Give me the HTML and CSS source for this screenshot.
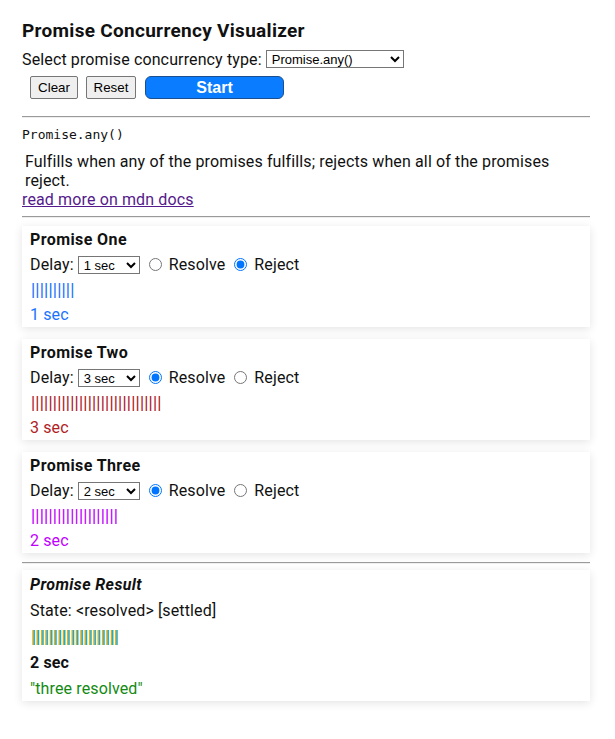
FILE: index.html
```html
<!DOCTYPE html>
<html lang="en">
<head>
<meta charset="utf-8">
<title>Promise Concurrency Visualizer</title>
<link rel="stylesheet" href="styles.css">
</head>
<body>
<div class="app">
  <h1 class="title">Promise Concurrency Visualizer</h1>
  <div class="type-row">
    <label for="ptype">Select promise concurrency type:</label>
    <select id="ptype" class="type-select">
      <option>Promise.all()</option>
      <option>Promise.allSettled()</option>
      <option selected>Promise.any()</option>
      <option>Promise.race()</option>
    </select>
  </div>
  <div class="actions">
    <button class="btn btn-clear">Clear</button>
    <button class="btn btn-reset">Reset</button>
    <button class="btn-start">Start</button>
  </div>
  <hr class="rule rule-top">
  <div class="code">Promise.any()</div>
  <p class="desc">Fulfills when any of the promises fulfills; rejects when all of the promises reject.</p>
  <a class="doc-link" href="#">read more on mdn docs</a>
  <hr class="rule rule-mid">

  <div class="card">
    <div class="card-title">Promise One</div>
    <div class="delay-row">
      <span>Delay:</span>
      <select class="delay-select"><option selected>1 sec</option><option>2 sec</option><option>3 sec</option></select>
      <input type="radio" name="p1"><span class="opt">Resolve</span>
      <input type="radio" name="p1" checked><span class="opt">Reject</span>
    </div>
    <div class="bars blue">||||||||||</div>
    <div class="sec blue">1 sec</div>
  </div>

  <div class="card">
    <div class="card-title">Promise Two</div>
    <div class="delay-row">
      <span>Delay:</span>
      <select class="delay-select"><option>1 sec</option><option>2 sec</option><option selected>3 sec</option></select>
      <input type="radio" name="p2" checked><span class="opt">Resolve</span>
      <input type="radio" name="p2"><span class="opt">Reject</span>
    </div>
    <div class="bars red">||||||||||||||||||||||||||||||</div>
    <div class="sec red">3 sec</div>
  </div>

  <div class="card">
    <div class="card-title">Promise Three</div>
    <div class="delay-row">
      <span>Delay:</span>
      <select class="delay-select"><option>1 sec</option><option selected>2 sec</option><option>3 sec</option></select>
      <input type="radio" name="p3" checked><span class="opt">Resolve</span>
      <input type="radio" name="p3"><span class="opt">Reject</span>
    </div>
    <div class="bars purple">||||||||||||||||||||</div>
    <div class="sec purple">2 sec</div>
  </div>

  <hr class="rule rule-result">

  <div class="card result">
    <div class="result-title">Promise Result</div>
    <div class="result-state">State: &lt;resolved&gt; [settled]</div>
    <div class="result-bars">||||||||||||||||||||</div>
    <div class="result-time">2 sec</div>
    <div class="result-value">"three resolved"</div>
  </div>
</div>
</body>
</html>
```

FILE: styles.css
```css
html, body {
  margin: 0;
  padding: 0;
  background: #ffffff;
}

body {
  font-family: Roboto, "Liberation Sans", sans-serif;
  font-size: 16px;
  letter-spacing: 0.13px;
  color: #111111;
}

.app {
  width: 568px;
  margin-left: 22px;
  padding-top: 19px;
  padding-bottom: 30px;
}

.title {
  margin: 0;
  font-size: 19px;
  font-weight: 700;
  letter-spacing: 0.3px;
  line-height: 23px;
  height: 23px;
}

.type-row {
  margin-top: 2px;
  height: 30px;
  display: flex;
  align-items: center;
  gap: 4px;
}

.type-select {
  width: 138px;
  height: 18px;
  font-family: "Liberation Sans", Arial, sans-serif;
  font-size: 13px;
  letter-spacing: 0;
  padding: 0 0 0 1px;
  border: 1px solid #767676;
  border-radius: 0;
  background: #fff;
  color: #000;
}

.actions {
  margin-top: 2px;
  display: flex;
  gap: 8px;
  padding-left: 8px;
  height: 23px;
}

.btn {
  height: 23px;
  padding: 0;
  font-family: "Liberation Sans", Arial, sans-serif;
  font-size: 13.33px;
  letter-spacing: 0;
  color: #000;
  background: #efefef;
  border: 1px solid #767676;
  border-radius: 2px;
}

.btn-clear { width: 48px; }
.btn-reset { width: 50px; }

.btn-start {
  margin-left: 1px;
  width: 139px;
  height: 23px;
  font-family: "Liberation Sans", Arial, sans-serif;
  font-size: 16px;
  font-weight: 700;
  letter-spacing: 0;
  color: #ffffff;
  background: #0a7cff;
  border: 1px solid #1b4f8f;
  border-radius: 6px;
  padding: 0;
}

.rule {
  height: 0;
  border: 0;
  border-top: 1px solid #9a9a9a;
  border-bottom: 1px solid #eeeeee;
  margin: 0;
}

.rule-top { margin-top: 17px; }
.rule-mid { margin-top: 7px; }
.rule-result { margin-top: 9px; }

.code {
  margin-top: 8px;
  font-family: "DejaVu Sans Mono", "Liberation Mono", monospace;
  font-size: 13px;
  letter-spacing: 0;
  line-height: 18px;
  color: #111;
}

.desc {
  margin: 8px 0 0 0;
  padding-left: 3px;
  width: 545px;
  line-height: 19px;
}

.doc-link {
  display: block;
  width: max-content;
  line-height: 19px;
  color: #551a8b;
  text-decoration: underline;
}

.card {
  margin-top: 12px;
  padding: 2px 8px 0;
  background: #ffffff;
  box-shadow: 0 2px 9px rgba(0, 0, 0, 0.11);
}

.rule-mid + .card { margin-top: 8px; }
.rule-result + .card { margin-top: 6px; }

.card-title {
  font-weight: 700;
  letter-spacing: 0.4px;
  height: 24px;
  line-height: 24px;
}

.delay-row {
  height: 25px;
  display: flex;
  align-items: center;
}

.delay-select {
  margin-left: 4px;
  width: 62px;
  height: 18px;
  font-family: "Liberation Sans", Arial, sans-serif;
  font-size: 13px;
  letter-spacing: 0;
  padding: 0 0 0 1px;
  border: 1px solid #767676;
  border-radius: 0;
  background: #fff;
  color: #000;
}

.delay-row input[type="radio"] {
  width: 13px;
  height: 13px;
  margin: 0 7px 0 9px;
}

.bars {
  height: 26px;
  line-height: 26px;
  font-family: "Liberation Sans", Arial, sans-serif;
  font-size: 16px;
  letter-spacing: 0.2px;
  padding-left: 1px;
}

.sec {
  height: 24px;
  line-height: 24px;
}

.blue { color: #1a73ff; }
.red { color: #b1221f; }
.purple { color: #c000ff; }

.result-title {
  font-weight: 700;
  font-style: italic;
  letter-spacing: 0.4px;
  height: 26px;
  line-height: 26px;
}

.result-state {
  height: 25px;
  line-height: 25px;
}

.result-bars {
  height: 27px;
  line-height: 27px;
  font-family: "Liberation Sans", Arial, sans-serif;
  font-size: 16px;
  letter-spacing: 0.2px;
  padding-left: 2px;
  color: #159e8c;
  text-shadow: -1px 0 #c9a400;
}

.result-time {
  font-weight: 700;
  height: 26px;
  line-height: 26px;
}

.result-value {
  color: #138a13;
  height: 25px;
  line-height: 25px;
}
```
